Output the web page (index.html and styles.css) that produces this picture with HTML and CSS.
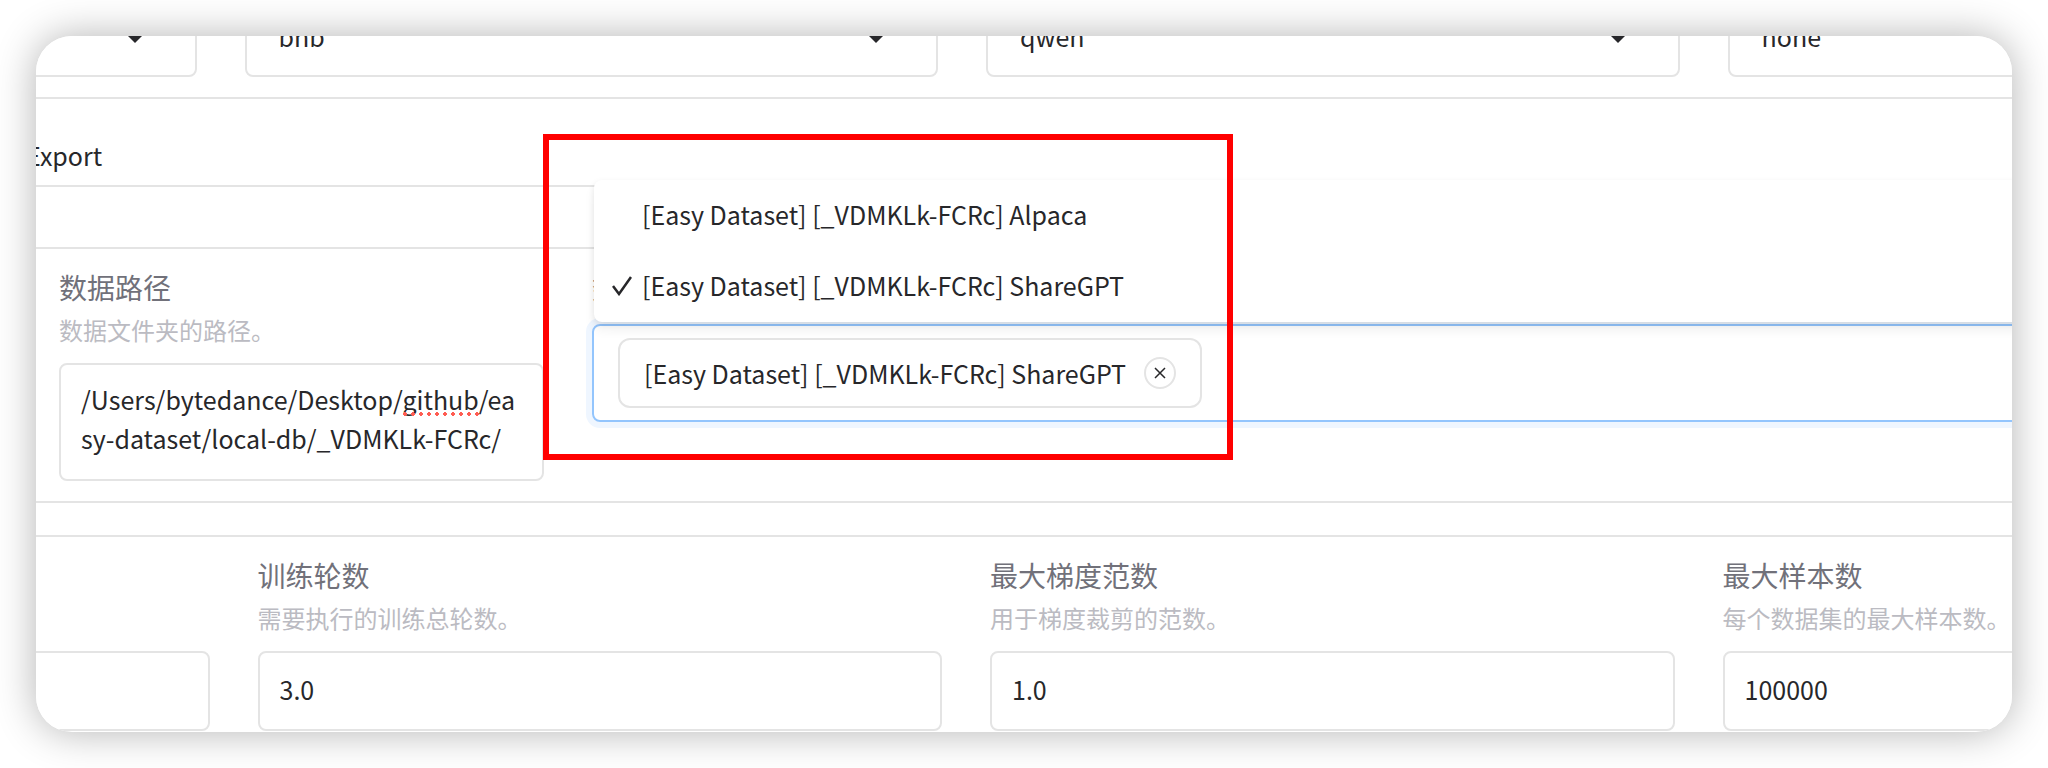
FILE: index.html
```html
<!DOCTYPE html>
<html lang="zh-CN">
<head>
<meta charset="utf-8">
<title>LLaMA Board</title>
<link rel="stylesheet" href="styles.css">
</head>
<body>
<main class="card">
  <section class="row row-top">
    <div class="select-box">
      <select aria-label="微调方法"><option></option></select>
      <svg class="caret" viewBox="0 0 18 10"><path d="M0 0h18L9 9z"/></svg>
    </div>
    <div class="select-box">
      <select aria-label="量化方法"><option>bnb</option></select>
      <svg class="caret" viewBox="0 0 18 10"><path d="M0 0h18L9 9z"/></svg>
    </div>
    <div class="select-box">
      <select aria-label="对话模板"><option>qwen</option></select>
      <svg class="caret" viewBox="0 0 18 10"><path d="M0 0h18L9 9z"/></svg>
    </div>
    <div class="select-box">
      <select aria-label="插值方法"><option>none</option></select>
      <svg class="caret" viewBox="0 0 18 10"><path d="M0 0h18L9 9z"/></svg>
    </div>
  </section>

  <nav class="tabs"><button type="button" class="tab">Export</button></nav>

  <section class="dataset">
    <div class="field">
      <label for="data-dir">数据路径</label>
      <p class="hint">数据文件夹的路径。</p>
      <div class="area">
        <textarea id="data-dir" rows="2" spellcheck="false">/Users/bytedance/Desktop/github/easy-dataset/local-db/_VDMKLk-FCRc/</textarea>
        <span class="typo"></span>
      </div>
    </div>
    <div class="field field-wide">
      <label for="dataset">数据集</label>
      <div class="multi">
        <span class="chip">[Easy Dataset] [_VDMKLk-FCRc] ShareGPT
          <button type="button" class="remove" aria-label="移除">
            <svg viewBox="0 0 12 12"><path d="M1 1l10 10M11 1L1 11"/></svg>
          </button>
        </span>
        <input id="dataset" class="query" type="text">
        <ul class="options" role="listbox">
          <li role="option" aria-selected="false"><span class="mark"></span>[Easy Dataset] [_VDMKLk-FCRc] Alpaca</li>
          <li role="option" aria-selected="true"><span class="mark"><svg viewBox="0 0 20 20"><path d="M1 10l6 8L19 1"/></svg></span>[Easy Dataset] [_VDMKLk-FCRc] ShareGPT</li>
        </ul>
      </div>
    </div>
  </section>

  <section class="row row-params">
    <div class="field">
      <label for="rate"></label>
      <p class="hint"></p>
      <input id="rate" class="number" type="text" aria-label="学习率">
    </div>
    <div class="field">
      <label for="epochs">训练轮数</label>
      <p class="hint">需要执行的训练总轮数。</p>
      <input id="epochs" class="number" type="text" value="3.0">
    </div>
    <div class="field">
      <label for="norm">最大梯度范数</label>
      <p class="hint">用于梯度裁剪的范数。</p>
      <input id="norm" class="number" type="text" value="1.0">
    </div>
    <div class="field">
      <label for="samples">最大样本数</label>
      <p class="hint">每个数据集的最大样本数。</p>
      <input id="samples" class="number" type="text" value="100000">
    </div>
  </section>

  <div class="highlight"></div>
</main>
</body>
</html>
```
FILE: styles.css
```css
* { box-sizing: border-box; }

body {
  margin: 0;
  padding: 36px;
  background: #fff;
  color: #27272a;
  font: 25px/39px "Noto Sans CJK SC", sans-serif;
}

button, input, select, textarea {
  margin: 0;
  font: inherit;
  color: inherit;
  background: #fff;
  outline: none;
}

.card {
  position: relative;
  overflow: hidden;
  border-radius: 36px;
  background: #fff;
  box-shadow: 0 0 40px rgba(0, 0, 0, 0.3);
}

.row {
  display: grid;
  grid-template-columns: repeat(4, 1fr);
  gap: 48px;
}

/* Top selectors, scrolled partly out of the card */
.row-top {
  width: calc(100% + 942px);
  margin: -39px 0 0 -533px;
  padding-bottom: 20px;
  border-bottom: 2px solid #e4e4e4;
}

.select-box { position: relative; }

.select-box select {
  display: block;
  width: 100%;
  height: 80px;
  padding: 0 32px 2px;
  border: 2px solid #e4e4e4;
  border-radius: 8px;
  appearance: none;
}

.caret {
  position: absolute;
  right: 53px;
  top: 37px;
  width: 18px;
  height: 10px;
  fill: #27272a;
}

.tabs {
  display: flex;
  align-items: flex-end;
  height: 88px;
  padding-bottom: 14px;
  border-bottom: 2px solid #e4e4e4;
}

.tab {
  margin-left: -10px;
  padding: 0;
  border: 0;
  line-height: 32px;
}

.dataset {
  display: flex;
  gap: 48px;
  margin-top: 60px;
  padding: 18px 0 20px 23px;
  border: solid #e4e4e4;
  border-width: 2px 0;
}

.field {
  display: flex;
  flex-direction: column;
  width: 485px;
}

.field-wide {
  flex: 1;
  width: auto;
  margin-right: -24px;
}

.field label {
  height: 40px;
  color: #71717a;
  font-size: 28px;
  line-height: 40px;
}

.hint {
  height: 36px;
  margin: 5px 0 15px;
  color: #bbbbc2;
  font-size: 24px;
  line-height: 36px;
  white-space: nowrap;
}

.area {
  position: relative;
  height: 118px;
}

.area textarea {
  display: block;
  width: 100%;
  height: 100%;
  padding: 15px 20px;
  border: 2px solid #e4e4e4;
  border-radius: 8px;
  overflow: hidden;
  resize: none;
  word-break: break-all;
}

/* Dotted spelling mark */
.typo {
  position: absolute;
  left: 344px;
  top: 49px;
  width: 76px;
  height: 4px;
  background: radial-gradient(circle at 2px 2px, #ff5c52 2px, transparent 2px) 0 0 / 8px 4px;
}

.multi {
  position: relative;
  display: flex;
  align-items: center;
  margin-top: 17px;
  padding: 12px 24px;
  border: 2px solid #93c5fd;
  border-radius: 8px;
  box-shadow: 0 0 0 6px #eff6ff;
}

.chip {
  display: flex;
  align-items: center;
  gap: 18px;
  height: 70px;
  padding: 0 24px;
  border: 2px solid #e4e4e4;
  border-radius: 12px;
  white-space: nowrap;
}

.remove {
  display: grid;
  place-items: center;
  width: 32px;
  height: 32px;
  padding: 0;
  border: 2px solid #e4e4e4;
  border-radius: 50%;
}

.remove svg {
  width: 12px;
  height: 12px;
  fill: none;
  stroke: #27272a;
  stroke-width: 1.5;
}

.query {
  flex: 1;
  min-width: 0;
  border: 0;
  background: none;
}

.options {
  position: absolute;
  z-index: 1;
  left: 0;
  right: 0;
  bottom: 98px;
  margin: 0;
  padding: 0;
  border-radius: 8px;
  background: #fff;
  box-shadow: 0 8px 12px rgba(0, 0, 0, 0.06), 0 2px 6px rgba(0, 0, 0, 0.08);
  list-style: none;
}

.options li {
  display: flex;
  align-items: center;
  padding: 15px 18px 17px;
  white-space: nowrap;
}

.mark {
  display: flex;
  width: 30px;
}

.mark svg {
  width: 20px;
  height: 20px;
  fill: none;
  stroke: #27272a;
  stroke-width: 2.5;
}

.row-params {
  width: calc(100% + 906px);
  margin: 32px 0 0 -511px;
  padding: 18px 0 1px;
  border-top: 2px solid #e4e4e4;
}

.row-params .field { width: auto; }

.number {
  width: 100%;
  height: 80px;
  padding: 0 20px 4px;
  border: 2px solid #e4e4e4;
  border-radius: 8px;
}

.highlight {
  position: absolute;
  z-index: 2;
  left: 507px;
  top: 98px;
  width: 690px;
  height: 326px;
  border: 6px solid #f00;
  pointer-events: none;
}
```
